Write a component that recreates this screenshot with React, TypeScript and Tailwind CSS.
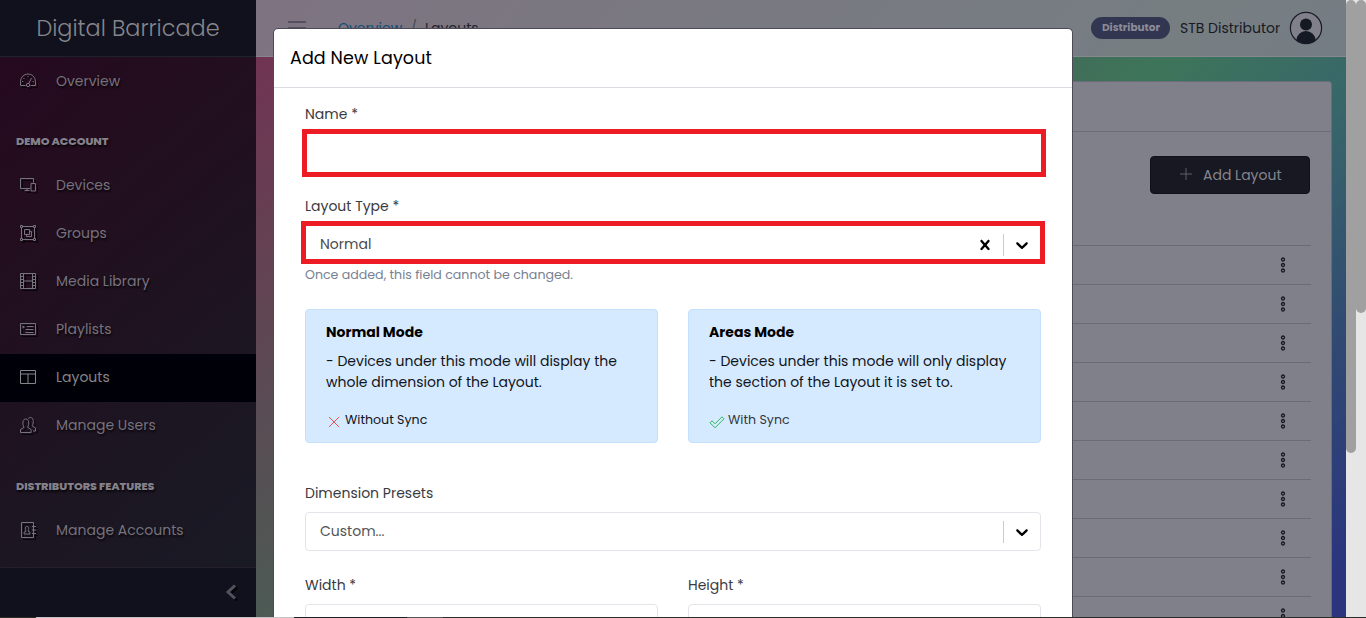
import type { ReactNode } from "react";

const dim = "drop-shadow-[2px_2px_0.5px_rgba(0,0,0,0.7)]";

function Svg({ children, className = "" }: { children: ReactNode; className?: string }) {
  return (
    <svg viewBox="0 0 16 16" fill="none" stroke="currentColor" strokeWidth="1" className={className}>
      {children}
    </svg>
  );
}

const icons: Record<string, ReactNode> = {
  speed: (
    <>
      <path d="M5.5 12.500H.5V8.500a7.500 7.500 0 0 1 15 0v4h-5" />
      <circle cx="8" cy="12" r="1.700" />
      <path d="M8.700 10.500 11.500 5M7.500 3.500h1M3.500 5.500h1M2 8.500h1.200M12.700 8.500h1.200" />
    </>
  ),
  devices: (
    <>
      <path d="M10.5 11.500H.5v-10h13v4M4.500 13.500h5M7 11.500v2" />
      <path d="M11 6.500h4.500v7.500H11z" />
    </>
  ),
  group: (
    <>
      <path d="M3 1.500h10M3 14.500h10M1.500 3v10M14.500 3v10" />
      <path d="M.5.5h2v2h-2zM13.5.5h2v2h-2zM.5 13.5h2v2h-2zM13.5 13.5h2v2h-2z" />
      <path d="M4.500 4.500h5v5h-5zM9.500 6.500h2v5h-5v-2" />
    </>
  ),
  film: (
    <>
      <path d="M.5.5h15v15H.5zM3.5.5v15M12.5.5v15M3.5 8h9" />
      <path d="M.5 3.5h3M.5 6.5h3M.5 9.5h3M.5 12.5h3M12.5 3.5h3M12.5 6.5h3M12.5 9.5h3M12.5 12.5h3" />
    </>
  ),
  playlist: (
    <>
      <path d="M.5 2.5h15v11H.5zM7 5.5h6.5M5.5 8.5h8M5.5 11.5h8" />
      <path d="M2.5 4.200v3.600L5 6z" fill="currentColor" stroke="none" />
    </>
  ),
  layout: <path d="M.5 1.5h15v13H.5zM.5 5h15M8 5v9.5" />,
  users: (
    <>
      <path d="M.5 15.5v-3l3.6-2.2C2.8 8.3 2.8 6.5 3 4.8 3.3 2.8 4.4 2 5.8 2s2.5.8 2.8 2.8c.2 1.7.2 3.5-1.1 5.5l3.6 2.2v3z" />
      <path d="M8.3 1.3C9 .8 9.6.5 10.3.5c1.5 0 2.6.9 2.9 2.8.2 1.7.1 3.600-1.100 5.500l3.400 2.200v3H13" />
    </>
  ),
  contact: (
    <>
      <path d="M1.5.5h12v15h-12zM12 4.5h4M12 8h4M12 11.5h4" />
      <path d="M4 12v-1.700l2-1.100c-.7-1.300-.7-2.500-.6-3.300.2-1 .8-1.400 1.600-1.400s1.400.4 1.600 1.400c.1.8.1 2-.6 3.300l2 1.100V12z" />
    </>
  ),
};

function Item({ icon, label, active }: { icon: string; label: string; active?: boolean }) {
  return (
    <a
      className={
        "flex h-12 shrink-0 items-center pl-5 text-[14px] " +
        (active ? "bg-[#000008] text-[#85858d]" : "text-[#76727e]")
      }
    >
      <Svg className={"mr-5 mt-[-3px] h-4 w-4 " + dim}>{icons[icon]}</Svg>
      <span className="mt-[-1px] [text-shadow:1px_2px_2px_rgba(0,0,0,0.7)]">{label}</span>
    </a>
  );
}

function Title({ children, className }: { children: ReactNode; className: string }) {
  return (
    <div
      className={
        "shrink-0 pl-4 text-[11.200px] font-extrabold leading-4 tracking-[-0.06px] text-[#85818b] [text-shadow:1px_2px_2px_rgba(0,0,0,0.7)] " +
        className
      }
    >
      {children}
    </div>
  );
}

function Sidebar() {
  return (
    <aside className="flex w-64 shrink-0 flex-col bg-[linear-gradient(140deg,#27081f_0%,#21101f_40%,#1b1723_75%,#191b26_100%)]">
      <div className="mb-px flex h-[57px] shrink-0 items-center justify-center border-b border-[#1d232c] bg-[#10111c] pt-[2px] text-[22.400px] text-[#85858d]">
        <span className="font-light">Digital Barricade</span>
      </div>
      <Item icon="speed" label="Overview" />
      <Title className="h-14 pt-[27px]">DEMO ACCOUNT</Title>
      <Item icon="devices" label="Devices" />
      <Item icon="group" label="Groups" />
      <Item icon="film" label="Media Library" />
      <Item icon="playlist" label="Playlists" />
      <Item icon="layout" label="Layouts" active />
      <Item icon="users" label="Manage Users" />
      <Title className="h-[57px] pt-7">DISTRIBUTORS FEATURES</Title>
      <Item icon="contact" label="Manage Accounts" />
      <div className="mt-auto flex h-[50px] shrink-0 items-center justify-end border-t border-[#241f2a] bg-[#10111c] pr-[19px]">
        <svg viewBox="0 0 12 16" className={"mt-[-1px] h-4 w-3 text-[#50535f] " + dim} fill="none" stroke="currentColor" strokeWidth="3">
          <path d="M10 1.500 3 8l7 6.500" />
        </svg>
      </div>
    </aside>
  );
}

function Topbar() {
  return (
    <header className="flex h-[57px] shrink-0 items-center border-b border-[#8b8d92]/70 bg-[#80808a]/85 pl-8 pr-[23px] text-[14px]">
      <svg viewBox="0 0 18 14" className="h-[14px] w-[18px]" stroke="#4a4354" strokeWidth="1.300">
        <path d="M0 1h18M0 7h18M0 13h18" />
      </svg>
      <nav className="ml-8 flex">
        <span className="text-[#124a72]">Overview</span>
        <span className="mx-2 text-[#4a4b58]">/</span>
        <span className="text-[#22222c]">Layouts</span>
      </nav>
      <div className="ml-auto flex items-center">
        <span className="flex h-[22px] w-[79px] items-center justify-center rounded-full bg-[#333650] pl-px text-[10.500px] font-bold text-[#8b8b98]">
          Distributor
        </span>
        <span className="ml-[10px] w-[100px] whitespace-nowrap text-[#191923]">STB Distributor</span>
        <svg viewBox="0 0 34 34" className="ml-[9px] h-[34px] w-[34px]">
          <circle cx="17" cy="17" r="15.600" fill="#80808a" stroke="#191923" strokeWidth="1.200" />
          <circle cx="17" cy="13.500" r="6" fill="#151923" />
          <path d="M7.500 29a9.500 9 0 0 1 19 0 15 15 0 0 1-19 0z" fill="#151923" />
        </svg>
      </div>
    </header>
  );
}

const rows = [0, 1, 2, 3, 4, 5, 6, 7, 8, 9];

function Content() {
  return (
    <main className="flex min-h-0 flex-1 flex-col overflow-hidden pl-[30px] pr-[14px] pt-6">
      <section className="flex shrink-0 flex-col rounded-[3px] border border-[#6b6c79] bg-[#80808a]">
        <div className="h-[50px] border-b border-[#6b6b7b]" />
        <div className="flex flex-col px-5 pt-6">
          <button className="mr-px flex h-[38px] w-40 items-center self-end rounded border border-[#10101b] bg-[#181822] pl-[29px] text-[14px] text-[#85858d]">
            <svg viewBox="0 0 12 12" className="mr-[11px] mt-[-2px] h-3 w-3" stroke="#5d5d67">
              <path d="M6 0v12M0 6h12" />
            </svg>
            <span>Add Layout</span>
          </button>
          <div className="mt-[51px] flex flex-col">
            {rows.map((r) => (
              <div key={r} className="flex h-[39px] items-center justify-end border-t border-[#6b6b75] pr-[25px]">
                <svg viewBox="0 0 6 16" className="h-4 w-[6px]" fill="none" stroke="#171721" strokeWidth="1.300">
                  <circle cx="3" cy="2.500" r="1.500" />
                  <circle cx="3" cy="8" r="1.500" />
                  <circle cx="3" cy="13.500" r="1.500" />
                </svg>
              </div>
            ))}
          </div>
        </div>
      </section>
    </main>
  );
}

function Chevron() {
  return (
    <svg viewBox="0 0 20 20" className="h-5 w-5" fill="#000">
      <path d="M4.516 7.548c0.436-0.446 1.043-0.481 1.576 0l3.908 3.747 3.908-3.747c0.533-0.481 1.141-0.446 1.574 0 0.436 0.445 0.408 1.197 0 1.615-0.406 0.418-4.695 4.502-4.695 4.502-0.217 0.223-0.502 0.335-0.787 0.335s-0.570-0.112-0.789-0.335c0 0-4.287-4.084-4.695-4.502s-0.436-1.170 0-1.615z" />
    </svg>
  );
}

function Cross() {
  return (
    <svg viewBox="0 0 20 20" className="h-5 w-5" fill="#000">
      <path d="M14.348 14.849c-0.469 0.469-1.229 0.469-1.697 0l-2.651-3.030-2.651 3.029c-0.469 0.469-1.229 0.469-1.697 0-0.469-0.469-0.469-1.229 0-1.697l2.758-3.150-2.759-3.152c-0.469-0.469-0.469-1.228 0-1.697s1.228-0.469 1.697 0l2.652 3.031 2.651-3.031c0.469-0.469 1.228-0.469 1.697 0s0.469 1.229 0 1.697l-2.758 3.152 2.758 3.150c0.469 0.469 0.469 1.229 0 1.698z" />
    </svg>
  );
}

function ModeCard({ title, lines, note }: { title: ReactNode; lines: ReactNode; note: ReactNode }) {
  return (
    <div className="h-[134px] w-[353px] rounded border border-[#c3e0fd] bg-[#d6eaff] pl-5 pt-3 text-[14px] text-[#10141a]">
      <div className="h-[21px] font-bold leading-[21px] text-black">{title}</div>
      <div className="mt-2 whitespace-nowrap leading-[21px]">{lines}</div>
      <div className="mt-[17px] flex h-[21px] items-center text-[12.600px]">{note}</div>
    </div>
  );
}

function Modal() {
  return (
    <div className="absolute left-[273px] top-[28px] flex h-[589px] w-[800px] flex-col overflow-hidden rounded-t-[5px] border border-b-0 border-[#4c4b55] bg-white text-[14px] text-[#3a3a42]">
      <div className="flex h-[59px] shrink-0 items-center border-b border-[#d8dbe0] pl-4 text-[17.500px] text-black">
        <span className="tracking-[0.12px]">Add New Layout</span>
      </div>
      <div className="flex flex-col pl-[31px] pt-4">
        <label className="h-[21px] leading-[21px]">Name *</label>
        <div className="-ml-[3px] mt-1 h-12 w-[744px] border-[5px] border-[#ed1c24]" />
        <label className="mt-[19px] h-[21px] leading-[21px]">Layout Type *</label>
        <div className="-ml-1 mt-1 flex h-[43px] w-[744px] items-center border-[5px] border-[#ed1c24] pl-[14px] pr-2 pt-[3px]">
          <span className="text-[#4a4a4a]">Normal</span>
          <span className="ml-auto flex items-center pt-[2px]">
            <Cross />
            <span className="mx-2 h-[22px] w-px bg-[#ccc]" />
            <Chevron />
          </span>
        </div>
        <small className="mt-[1px] h-5 text-[12.600px] leading-5 text-[#768192]">
          Once added, this field cannot be changed.
        </small>
        <div className="mt-6 flex gap-[30px]">
          <ModeCard
            title="Normal Mode"
            lines={
              <>
                <div>- Devices under this mode will display the</div>
                <div>whole dimension of the Layout.</div>
              </>
            }
            note={
              <>
                <svg viewBox="0 0 16 16" className="mr-[3px] mt-[2px] h-4 w-4" stroke="#e55353" fill="none">
                  <path d="m3 3 10 10M13 3 3 13" />
                </svg>
                <span>Without Sync</span>
              </>
            }
          />
          <ModeCard
            title="Areas Mode"
            lines={
              <>
                <div>- Devices under this mode will only display</div>
                <div>the section of the Layout it is set to.</div>
              </>
            }
            note={
              <>
                <svg viewBox="0 0 16 16" className="mr-[3px] mt-[2px] h-4 w-4" stroke="#2eb85c" fill="none">
                  <path d="m6 13.800-5-5 2-2 3 3 7-7 2 2z" />
                </svg>
                <span className="text-[#33383e]">With Sync</span>
              </>
            }
          />
        </div>
        <label className="mt-10 h-[21px] leading-[21px]">Dimension Presets</label>
        <div className="mt-2 flex h-[39px] w-[736px] items-center rounded border border-[#e4e5ea] pl-[14px] pr-2">
          <span className="text-[#555]">Custom...</span>
          <span className="ml-auto flex items-center">
            <span className="mr-2 h-[22px] w-px bg-[#ccc]" />
            <Chevron />
          </span>
        </div>
        <div className="mt-6 flex gap-[30px]">
          <div className="flex w-[353px] flex-col">
            <label className="h-[21px] leading-[21px]">Width *</label>
            <div className="mt-2 h-[38px] shrink-0 rounded border border-[#e4e5ea]" />
          </div>
          <div className="flex w-[353px] flex-col">
            <label className="h-[21px] leading-[21px]">Height *</label>
            <div className="mt-2 h-[38px] shrink-0 rounded border border-[#e4e5ea]" />
          </div>
        </div>
      </div>
    </div>
  );
}

export default function App() {
  return (
    <div className="relative flex h-[618px] w-[1366px] flex-col overflow-hidden font-['Poppins','Inter',sans-serif]">
      <div className="flex h-[617px] shrink-0">
        <Sidebar />
        <div className="flex min-w-0 flex-1 flex-col bg-[linear-gradient(135deg,#743052_0%,#4f5754_34%,#3d755a_57%,#38666a_70%,#304a72_83%,#2a357e_97%)]">
          <Topbar />
          <Content />
        </div>
        <div className="w-[10px] bg-[#e6e6e6]">
          <div className="h-[453px] rounded-full bg-[#a0a0a0]" />
        </div>
        <div className="w-[10px] bg-[#e6e6e6]">
          <div className="h-[313px] rounded-full bg-[#a0a0a0]" />
        </div>
      </div>
      <div className="flex h-px shrink-0 bg-[#2a2c2a]">
        <div className="w-9 bg-[#2b3023]" />
        <div className="w-[258px] bg-[#c4c4c4]" />
        <div className="w-[113px] bg-[#1e1f22]" />
        <div className="w-9 bg-[#555]" />
      </div>
      <Modal />
    </div>
  );
}
